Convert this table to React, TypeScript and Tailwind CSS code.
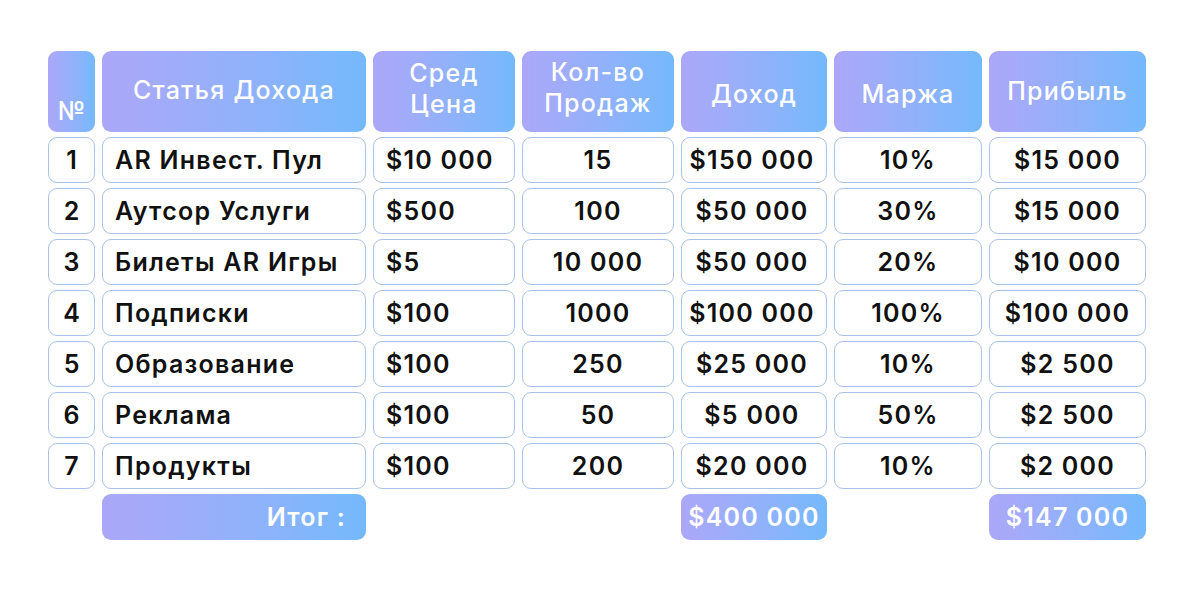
import React from 'react';

type Row = {
  n: string;
  name: string;
  price: string;
  qty: string;
  income: string;
  margin: string;
  profit: string;
};

const rows: Row[] = [
  { n: '1', name: 'AR Инвест. Пул', price: '$10 000', qty: '15', income: '$150 000', margin: '10%', profit: '$15 000' },
  { n: '2', name: 'Аутсор Услуги', price: '$500', qty: '100', income: '$50 000', margin: '30%', profit: '$15 000' },
  { n: '3', name: 'Билеты AR Игры', price: '$5', qty: '10 000', income: '$50 000', margin: '20%', profit: '$10 000' },
  { n: '4', name: 'Подписки', price: '$100', qty: '1000', income: '$100 000', margin: '100%', profit: '$100 000' },
  { n: '5', name: 'Образование', price: '$100', qty: '250', income: '$25 000', margin: '10%', profit: '$2 500' },
  { n: '6', name: 'Реклама', price: '$100', qty: '50', income: '$5 000', margin: '50%', profit: '$2 500' },
  { n: '7', name: 'Продукты', price: '$100', qty: '200', income: '$20 000', margin: '10%', profit: '$2 000' },
];

const head = 'rounded-[9px] bg-linear-to-r from-[#aca7f8] to-[#74b9fc] text-white font-medium text-[25px] leading-[31px] tracking-[0.05em]';
const cell = 'h-[46px] pt-[2px] rounded-[9px] border border-[#a9c2e8] bg-white flex items-center text-[#111] font-semibold text-[25px] tracking-[0.05em]';

const App = () => {
  return (
    <div className="w-[1187px] h-[605px] bg-white font-['Inter','Liberation_Sans',sans-serif]">
      <div className="pt-[51px] pl-[48px]">
        <div className="grid grid-cols-[47px_264px_142px_152px_146px_148px_157px] gap-x-[7px] gap-y-[5px]">
          {/* header */}
          <div className={`${head} h-[81px] flex items-end justify-center pb-[5px] text-[22px] tracking-normal`}>№</div>
          <div className={`${head} h-[81px] flex items-center justify-center pb-[2px]`}>Статья Дохода</div>
          <div className={`${head} h-[81px] flex items-center justify-center text-center pb-[6px]`}>
            Сред
            <br />
            Цена
          </div>
          <div className={`${head} h-[81px] flex items-center justify-center text-center pb-[8px]`}>
            Кол-во
            <br />
            Продаж
          </div>
          <div className={`${head} h-[81px] flex items-center justify-center pt-[6px]`}>Доход</div>
          <div className={`${head} h-[81px] flex items-center justify-center pt-[6px]`}>Маржа</div>
          <div className={`${head} h-[81px] flex items-center justify-center`}>Прибыль</div>

          {rows.map((r) => (
            <React.Fragment key={r.n}>
              <div className={`${cell} justify-center text-[#1c1c3c] tracking-normal`}>{r.n}</div>
              <div className={`${cell} pl-[12px]`}>{r.name}</div>
              <div className={`${cell} pl-[12px]`}>{r.price}</div>
              <div className={`${cell} justify-center`}>{r.qty}</div>
              <div className={`${cell} justify-center pr-[4px]`}>{r.income}</div>
              <div className={`${cell} justify-center`}>{r.margin}</div>
              <div className={`${cell} justify-center`}>{r.profit}</div>
            </React.Fragment>
          ))}

          {/* totals */}
          <div />
          <div className={`${head} h-[46px] flex items-center justify-end pr-[20px] font-semibold`}>Итог :</div>
          <div />
          <div />
          <div className={`${head} h-[46px] flex items-center justify-center font-semibold`}>$400 000</div>
          <div />
          <div className={`${head} h-[46px] flex items-center justify-center font-semibold`}>$147 000</div>
        </div>
      </div>
    </div>
  );
};

export default App;
